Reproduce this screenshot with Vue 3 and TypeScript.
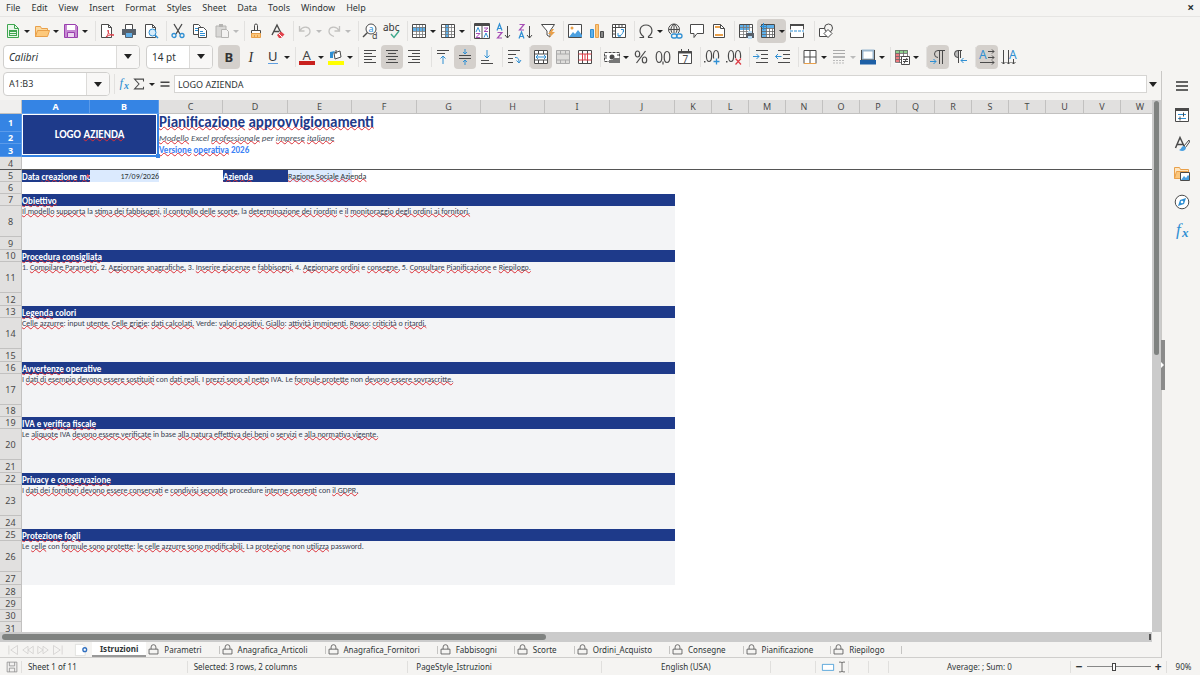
<script setup lang="ts">
import { ref } from 'vue'

interface Tool {
  icon: string
  label: string
  drop?: boolean
  active?: boolean
  disabled?: boolean
}
type Item = Tool | 'sep' | 'wide'

const K = '#4a4a4a'
const B = '#2f8fd3'
const O = '#e9a04a'
const line = (d: string, c = K, w = 1) => `<path d="${d}" fill="none" stroke="${c}" stroke-width="${w}"/>`
const fill = (d: string, c = K) => `<path d="${d}" fill="${c}"/>`
const letter = (t: string, x: number, y: number, s: number, c = K, extra = '') =>
  `<text x="${x}" y="${y}" font-size="${s}" fill="${c}" ${extra}>${t}</text>`
const paper = fill('M1 1h14v14H1z', '#fff')
const grid = line('M1.5 4.5h13M1.5 8.5h13M1.5 11.5h13M5.5 1.5v13M8.5 1.5v13M11.5 1.5v13', '#777', 0.8) + line('M1.5 1.5h13v13h-13z')

const icons: Record<string, string> = {
  new: `<path d="M2.500 1.500h7l4 4v9h-11z" fill="#e9f7ea" stroke="#3fa650"/>` + line('M9.500 1.500v4h4', '#3fa650') + fill('M4 7h8v6H4z', '#3fa650') + line('M5 9.500h6M5 11.500h6', '#e9f7ea'),
  open: `<path d="M1.500 14V3.500h5l1 2h6V8" fill="#fbd9a0" stroke="${O}"/><path d="M1.500 13.500l2-6h12l-2 6z" fill="#fdc97c" stroke="${O}"/>`,
  save: `<path d="M1.500 1.500h11l2 2v11h-13z" fill="#c688d2" stroke="#9a3fae"/><path d="M4 2h8v5H4z" fill="#fff"/><path d="M4.500 9.500h7v5h-7z" fill="#ecd5f0" stroke="#9a3fae"/>`,
  pdf: `<path d="M2.500 1.500h7l3 3v10h-10z" fill="#fff" stroke="${K}"/>` + line('M9.500 1.500v3h3') + line('M7 14c2-2 3-4 2-7c0 4 3 6 6 5c-2-1-5 0-8 2', '#dc3b45'),
  print: `<path d="M4.500 1.500h7v5h-7z" fill="#fff" stroke="${K}"/>` + fill('M1 6h14v6H1z', '#57606a') + `<path d="M4.500 9.500h7v5h-7z" fill="#62aee6" stroke="#57606a"/>`,
  preview: `<path d="M2.500 1.500h7l3 3v10h-10z" fill="#fff" stroke="${K}"/>` + line('M9.500 1.500v3h3') + `<circle cx="9.500" cy="9.500" r="3.500" fill="#d7ecfa" stroke="${B}"/>` + line('M12 12l3 3', B, 1.5),
  cut: line('M4 1l6 10M12 1L6 11', K, 1.3) + `<circle cx="4" cy="12.500" r="2" fill="none" stroke="${B}" stroke-width="1.300"/><circle cx="12" cy="12.500" r="2" fill="none" stroke="${B}" stroke-width="1.300"/>`,
  copy: `<path d="M1.500 1.500h5l2 2v8h-7z" fill="#fff" stroke="${K}"/>` + line('M3 5.500h3M3 7.500h3', B) + `<path d="M6.500 4.500h5l3 3v7h-8z" fill="#fff" stroke="${K}"/>` + line('M8 8.500h3M8 10.500h5M8 12.500h5', B),
  paste: `<path d="M2 3h10v11H2z" fill="#d9d8d6" stroke="#b5b4b2"/><path d="M5 1h4v3H5z" fill="#b5b4b2"/><path d="M7.500 6.500h5l2 2v6h-7z" fill="#f3f2f1" stroke="#b5b4b2"/>`,
  brush: line('M6.500 7V2.500a1.500 1.500 0 0 1 3 0V7') + `<path d="M3.500 7.500h9v3h-9z" fill="#fff" stroke="${K}"/><path d="M3.500 10.500h9v4h-9z" fill="#fbc77d" stroke="${O}"/>` + line('M6.500 12v2M9.500 12v2', O),
  clear: line('M2 12L7 2l4 8M4 8.500h5', K, 1.4) + `<path d="M7 12l4-3.500 3.500 3L11 15H9z" fill="#e2434d"/>` + line('M8.500 10.500l3.500 3.500', '#fff'),
  undo: line('M2.500 3v5h5M3 7.500c3-5 10-4 10 1c0 2-2 4-5 5', '#c3c2c0', 1.3),
  redo: line('M13.500 3v5h-5M13 7.500c-3-5-10-4-10 1c0 2 2 4 5 5', '#c3c2c0', 1.3),
  find: `<circle cx="9" cy="6" r="5" fill="#fff" stroke="${K}"/>` + line('M5.500 9.500L1 14', K, 1.5) + letter('a', 6.5, 8.5, 9, B) + letter('d', 10, 16, 9),
  spell: letter('abc', -1, 8, 10, '#333') + line('M7 11l3 3.500 5-6.500', '#3fa98c', 1.4),
  row: paper + fill('M2 4h13v4H2z', '#5fb0ea') + grid,
  col: paper + fill('M5 1h4v13H5z', '#5fb0ea') + grid,
  sort: `<path d="M.500 .500h15v15H.500z" fill="#fff" stroke="${K}"/>` + fill('M1 1h14v2H1z') + line('M8 3v12') + line('M2 9l2-4.500L6 9M10 14.500l2-4.500 2 4.500', B) + line('M2 10.500h4l-4 4h4M10 5h4l-4 3.500h4', '#a64fb5'),
  asc: line('M1 7.500L3.500 1 6 7.500M2 5.500h3', B, 1.2) + line('M1.500 9.500h4.500L1.500 15H6', '#a64fb5', 1.2) + line('M11.500 3v12M9 12l2.500 3 2.500-3'),
  desc: line('M1.500 1.500h4.500L1.500 7H6', '#a64fb5', 1.2) + line('M1 15.500L3.500 9 6 15.500M2 13.500h3', B, 1.2) + line('M11.500 3v12M9 12l2.500 3 2.500-3'),
  filter: `<path d="M1.500 1.500h13L10 8v6l-3-2V8z" fill="#fff" stroke="${K}"/>` + fill('M12 6l-4 5h3l-2 4 6-6h-3l2-3z', O),
  image: `<path d="M1.500 1.500h13v13h-13z" fill="#fff" stroke="${K}"/><circle cx="5" cy="5" r="1.500" fill="${O}"/>` + fill('M2 14l4-5 2 2 3-4 4 5v2z', '#4ba0e0'),
  chart: `<path d="M1.500 6.500h3v8h-3z" fill="#5fb0ea" stroke="${B}"/><path d="M6.500 1.500h3v13h-3z" fill="#fbc77d" stroke="${O}"/><path d="M11.500 8.500h3v6h-3z" fill="#888" stroke="${K}"/>`,
  pivot: `<path d="M1.500 1.500h13v13h-13z" fill="#fff" stroke="${K}"/>` + line('M1.500 4.500h13M4.500 1.500v13M8 1.500v3M11 1.500v3M1.500 8h3M1.500 11h3') + line('M7 10v3h3M12.500 9V6.500H10M7 13c3 0 5-2 5.500-6', B),
  omega: line('M1.500 14.500h4v-1C-.500 9 2 2 8 2s8.500 7 2.500 11.500v1h4', K, 1.2),
  link: `<circle cx="7" cy="6.500" r="5.500" fill="none" stroke="${K}"/>` + line('M1.500 6.500h11M7 1v11M7 1c-4 3-4 8 0 11M7 1c4 3 4 8 0 11') + `<rect x="4" y="10" width="12" height="6" fill="#f5f4f2"/><rect x="4.500" y="11" width="5.500" height="4" rx="2" fill="none" stroke="${B}" stroke-width="1.300"/><rect x="9.500" y="11" width="5.500" height="4" rx="2" fill="none" stroke="${B}" stroke-width="1.300"/>`,
  comment: `<path d="M1.500 1.500h13v9H8l-3 4v-4H1.500z" fill="#fff" stroke="${K}"/>`,
  header: `<path d="M2.500 1.500h7l4 4v9h-11z" fill="#fff" stroke="${K}"/>` + fill('M4 3h5v2H4zM4 11h8v2H4z', O) + line('M9.500 1.500v4h4'),
  area: paper + fill('M2 2h9v5H2z', '#5fb0ea') + grid + fill('M8 10h8v5H8z', '#57606a') + fill('M10 8h4v2h-4zM10 13h4v3h-4z', '#b9dcf5'),
  freeze: fill('M2 2h13v3H2zM2 2h4v12H2z', '#5fb0ea') + fill('M6 5h9v9H6z', '#fff') + line('M1.500 5.500h13M6.500 1.500v13M1.500 8.500h13M1.500 11.500h13M9.500 5.500v9M12.500 5.500v9', '#666', 0.8) + line('M1.500 1.500h13v13h-13z') + line('M3.500 0v7M0 3.500h7', B),
  split: `<path d="M1.500 1.500h13v13h-13z" fill="#fff" stroke="${K}"/>` + fill('M1 1h14v2H1z') + `<path d="M0 8h16" stroke="#fff" stroke-width="3"/><path d="M1 8h14" stroke="${B}" stroke-dasharray="3 1"/>`,
  shapes: `<path d="M1.500 5.500h8v8h-8z" fill="#fff" stroke="${K}"/><circle cx="10.500" cy="5" r="4" fill="#f5f4f2" stroke="${K}"/><path d="M10 6.500l4 4-4 4-4-4z" fill="#fff" stroke="${K}"/>`,
  bold: letter('B', 3.5, 13, 13, '#333', 'font-weight="bold"'),
  italic: letter('I', 5.5, 13, 14, '#333', 'font-style="italic" font-family="Liberation Serif"'),
  underline: letter('U', 3, 11.5, 13, '#333') + line('M3 14.500h10', '#5f9fe0'),
  color: letter('A', 3.5, 10.5, 13, '#444') + fill('M0 12h16v4H0z', '#c9211e'),
  marker: `<path d="M6 4l6-2 1 6-6 2z" fill="#fff" stroke="${K}"/>` + line('M8 5V1') + fill('M2 3l5-1-2 3v4H2z', B) + fill('M0 12h16v4H0z', '#ffff00'),
  left: line('M2 1.500h12M2 4.500h8M2 7.500h12M2 10.500h8M2 13.500h12'),
  center: line('M2 1.500h12M4 4.500h8M2 7.500h12M4 10.500h8M2 13.500h12'),
  right: line('M2 1.500h12M6 4.500h8M2 7.500h12M6 10.500h8M2 13.500h12'),
  top: line('M2 1.500h12M2 4.500h8') + line('M8 15V7M5.500 9.500L8 7l2.500 2.500', B),
  middle: line('M2 6.500h12M2 9.500h12') + line('M8 0v5M6 3l2 2 2-2M8 16v-5M6 13l2-2 2 2', B),
  bottom: line('M2 11.500h8M2 14.500h12') + line('M8 1v8M5.500 6.500L8 9l2.500-2.500', B),
  wrap: line('M2 1.500h12M2 5.500h8M2 9.500h5M2 13.500h5') + line('M9 8.500c3 0 4 1 4 5M10.500 11.500l2.500 2.500 2-3', B),
  mergecenter: `<path d="M1 1h14v14H1z" fill="#fff"/>` + line('M1.500 1.500h13v13h-13zM1.500 5h13M1.500 11h13M5.500 1.500V5M10.500 1.500V5M5.500 11v3.500M10.500 11v3.500') + line('M3 8h10M5 6L3 8l2 2M11 6l2 2-2 2', B),
  merge: `<path d="M1.500 1.500h13v13h-13z" fill="#dedddb" stroke="#aaa"/>` + line('M1.500 5h13M1.500 11h13M5.500 1.500V5M10.500 1.500V5M5.500 11v3.500M10.500 11v3.500', '#aaa'),
  unmerge: paper + line('M1.500 1.500h13v13h-13zM5.500 1.500V5M10.500 1.500V5M5.500 11v3.500M10.500 11v3.500') + line('M1.500 5h13M1.500 11h13M5.500 5v6M10.500 5v6M8 5v6', '#dc3b45'),
  money: `<path d="M.500 3.500h15v9H.500z" fill="#fff" stroke="${K}" stroke-dasharray="3 1"/><circle cx="8" cy="8" r="2.500" fill="${K}"/>` + fill('M9 9h7v5H5v-3h4z', '#777') + line('M2 6v4M14 5v2'),
  percent: line('M12.500 2L3.500 14', K, 1.2) + `<ellipse cx="4.500" cy="5" rx="2.200" ry="3" fill="none" stroke="${K}" stroke-width="1.200"/><ellipse cx="11.500" cy="11" rx="2.200" ry="3" fill="none" stroke="${K}" stroke-width="1.200"/>`,
  number: `<ellipse cx="4" cy="8" rx="2.800" ry="5.500" fill="none" stroke="${K}" stroke-width="1.200"/><ellipse cx="12" cy="8" rx="2.800" ry="5.500" fill="none" stroke="${K}" stroke-width="1.200"/>` + line('M8 12.500v3', K, 1.2),
  date: `<path d="M1.500 2.500h13v12h-13z" fill="#fff" stroke="${K}"/>` + line('M1 3.500h14', K, 2) + line('M4.500 0v3M11.500 0v3') + letter('7', 5.5, 13.5, 10),
  adddec: `<ellipse cx="5" cy="7" rx="2.600" ry="5.500" fill="none" stroke="${K}" stroke-width="1.200"/><ellipse cx="12" cy="7" rx="2.600" ry="5.500" fill="none" stroke="${K}" stroke-width="1.200"/>` + fill('M0 12h1.500v1.500H0z') + `<path d="M8 9.500h8V16H8z" fill="#f5f4f2"/>` + line('M12.500 9.500v6M9.500 12.500h6', B, 1.3),
  deldec: `<ellipse cx="5" cy="7" rx="2.600" ry="5.500" fill="none" stroke="${K}" stroke-width="1.200"/><ellipse cx="12" cy="7" rx="2.600" ry="5.500" fill="none" stroke="${K}" stroke-width="1.200"/>` + fill('M0 12h1.500v1.500H0z') + `<path d="M9 9h7v7H9z" fill="#f5f4f2"/>` + line('M9.500 9.500l5.500 6M15 9.500l-5.500 6', '#dc3b45', 1.2),
  indent: line('M3 1.500h12M8 5.500h7M8 9.500h7M3 13.500h12') + line('M0 7.500h6M3.500 5L6 7.500 3.500 10', B),
  outdent: line('M3 1.500h12M8 5.500h7M8 9.500h7M3 13.500h12') + line('M6.500 7.500h-6M3 5L.500 7.500 3 10', B),
  borders: `<path d="M2 2h12v12H2z" fill="#fff"/>` + line('M2 14.500V1.500h12v13M2 8h12M8 1.500v13') + line('M2 14.500h12', O),
  style: line('M2 1.500h12M2 4.500h12', '#aaa') + line('M2 8h12', '#b5b5b5', 2) + `<path d="M2 11.500h12M2 14h12" stroke="#bbb" stroke-dasharray="2 1"/>`,
  linecolor: `<path d="M2.500 1.500h11v9h-11z" fill="#fff" stroke="#9bb7cf" stroke-width="2"/>` + line('M1.500 1v10h13V1') + fill('M0 11h16v4.500H0z', '#1d5fa6'),
  cond: paper + fill('M1 1h13v3H1z', '#8fd08f') + fill('M1 4h5v9H1z', '#ee7b80') + line('M1.500 1.500h12v12h-12zM1.500 4.500h12M1.500 7.500h12M1.500 10.500h12M5.500 1.500v12M9.500 1.500v12', '#666', 0.8) + `<path d="M7.500 7.500h8v8h-8z" fill="#fff" stroke="${K}"/>` + line('M9 10.500h5M9 12.500h5M13 9l-3 5.500'),
  ltr: line('M9.500 15V2M12.500 15V2M15 1.500H8a3.500 3.500 0 0 0 0 7') + line('M0 12.500h6M3.500 10L6 12.500 3.500 15', B),
  rtl: fill('M6 1a3.500 3.500 0 0 0 0 7.500z', '#bbb') + line('M6.500 14V2M8.500 9V2M10 1.500H6a3.500 3.500 0 0 0 0 7') + line('M15 11.500H9M11.500 9L9 11.500l2.500 2.500', B),
  horizontal: letter('A', 0, 10, 12, B) + line('M9 2.500h6M9 8.500h6M1 13.500h14M13 .500l2 2-2 2M13 6.500l2 2-2 2M13 11.500l2 2-2 2'),
  vertical: letter('A', 8, 9.5, 12, B) + line('M2.500 1v14M7.500 1v14M12.500 10v5M.500 13l2 2 2-2M5.500 13l2 2 2-2M10.500 13l2 2 2-2'),
  menu: line('M2 4h12M2 8h12M2 12h12', '#333', 1.6),
  properties: `<path d="M1.500 1.500h13v13h-13z" fill="#fff" stroke="${K}"/>` + fill('M1 1h14v3H1z') + line('M4 7.500h8M4 11.500h8', B) + line('M9.500 5.500v4M6 9.500v4'),
  styles: line('M1.500 12L6 1.500l4 8.500M3 8.500h6', K, 1.5) + `<path d="M15 4l-5 6 1.500 1.500L15.500 6z" fill="#fff" stroke="${K}"/>` + fill('M10 10c-3 0-2 3-5 4 3 2 7 1 7-2.500z', '#4ba0e0'),
  gallery: `<path d="M.500 13.500v-11h5l1 2h8v3" fill="#fde5c0" stroke="${O}"/><path d="M.500 13.500l2-7h11v7z" fill="#fbc77d" stroke="${O}"/><path d="M6.500 7.500h9v8h-9z" fill="#fff" stroke="${K}"/>` + fill('M7 15l3-4 2 2 2-3 1 1v4z', '#4ba0e0'),
  navigator: `<circle cx="8" cy="8" r="6.800" fill="#fff" stroke="${K}"/>` + `<path d="M12 4l-2 6-6 2 2-6z" fill="#2f8fd3"/><circle cx="8" cy="8" r="1.300" fill="#fff"/>`,
  fx: letter('f', 2, 12, 17, B, 'font-style="italic" font-family="Liberation Serif"') + letter('x', 8, 14, 13, B, 'font-style="italic" font-weight="bold" font-family="Liberation Serif"'),
  sigma: line('M14 4.500V1.500H2l6 6.500-6 6.500h12v-3', K, 1.4),
  equals: line('M2 5.500h12M2 10.500h12', '#444', 2),
  lock: line('M1.500 7.500h13v7h-13zM4.500 7.500v-3a3.500 3.500 0 0 1 7 0v3', '#555', 1.2),
  first: line('M2.500 2v12M14 2L5 8l9 6V2', '#cfcecc'),
  prev: line('M8 3L1 8l7 5zM15 3L8 8l7 5z', '#cfcecc'),
  next: line('M1 3l7 5-7 5zM8 3l7 5-7 5z', '#cfcecc'),
  last: line('M13.500 2v12M2 2l9 6-9 6V2', '#cfcecc'),
  addsheet: `<path d="M.500 .500h10l3 3v12h-13z" fill="#fff" stroke="#dad9d7"/>` + `<circle cx="13" cy="7.500" r="2.500" fill="#fff" stroke="#2f6fc0" stroke-width="1.800"/>`,
  disk: `<path d="M1.500 1.500h13v13h-13z" fill="#f2f1f0" stroke="#888"/>` + line('M4.500 1.500v5h7v-5M4.500 14.500v-5h7v5', '#888'),
  rect: `<path d="M.500 4.500h15v8H.500z" fill="#fff" stroke="${B}"/>`,
  beam: line('M4 1.500h3l1 1 1-1h3M8 2v12M4 14.500h3l1-1 1 1h3', '#444')
}

const tool = (icon: string, label: string, flags = ''): Tool => ({
  icon, label, drop: flags.includes('d'), active: flags.includes('a'), disabled: flags.includes('x')
})

const standard: Item[] = [
  tool('new', 'New', 'd'), tool('open', 'Open', 'd'), tool('save', 'Save', 'd'), 'wide',
  tool('pdf', 'Export as PDF'), tool('print', 'Print'), tool('preview', 'Print Preview'), 'sep',
  tool('cut', 'Cut'), tool('copy', 'Copy'), tool('paste', 'Paste', 'dx'), 'sep',
  tool('brush', 'Clone Formatting'), tool('clear', 'Clear Direct Formatting'), 'sep',
  tool('undo', 'Undo', 'dx'), tool('redo', 'Redo', 'dx'), 'wide',
  tool('find', 'Find and Replace'), tool('spell', 'Spelling'), 'sep',
  tool('row', 'Row', 'd'), tool('col', 'Column', 'd'), 'sep',
  tool('sort', 'Sort'), tool('asc', 'Sort Ascending'), tool('desc', 'Sort Descending'), tool('filter', 'AutoFilter'), 'sep',
  tool('image', 'Insert Image'), tool('chart', 'Insert Chart'), tool('pivot', 'Pivot Table'), 'sep',
  tool('omega', 'Special Character', 'd'), tool('link', 'Hyperlink'), tool('comment', 'Comment'), tool('header', 'Headers and Footers'), 'sep',
  tool('area', 'Define Print Area'), tool('freeze', 'Freeze Rows and Columns', 'da'), tool('split', 'Split Window'), 'wide',
  tool('shapes', 'Show Draw Functions')
]

const formatting: Item[] = [
  tool('bold', 'Bold', 'a'), tool('italic', 'Italic'), tool('underline', 'Underline', 'd'), 'sep',
  tool('color', 'Font Color', 'd'), tool('marker', 'Background Color', 'd'), 'sep',
  tool('left', 'Align Left'), tool('center', 'Center Horizontally', 'a'), tool('right', 'Align Right'), 'wide',
  tool('top', 'Align Top'), tool('middle', 'Center Vertically', 'a'), tool('bottom', 'Align Bottom'), 'sep',
  tool('wrap', 'Wrap Text'), 'sep',
  tool('mergecenter', 'Merge and Center', 'a'), tool('merge', 'Merge Cells', 'x'), tool('unmerge', 'Unmerge Cells'), 'sep',
  tool('money', 'Currency', 'd'), tool('percent', 'Percent'), tool('number', 'Number'), tool('date', 'Date'), 'sep',
  tool('adddec', 'Add Decimal Place'), tool('deldec', 'Delete Decimal Place'), 'sep',
  tool('indent', 'Increase Indent'), tool('outdent', 'Decrease Indent'), 'sep',
  tool('borders', 'Borders', 'd'), tool('style', 'Border Style', 'dx'), tool('linecolor', 'Border Color', 'd'), 'sep',
  tool('cond', 'Conditional Formatting', 'd'), 'wide',
  tool('ltr', 'Left-To-Right', 'a'), tool('rtl', 'Right-To-Left'), 'sep',
  tool('horizontal', 'Text left to right', 'a'), tool('vertical', 'Text top to bottom')
]

const menus = ['File', 'Edit', 'View', 'Insert', 'Format', 'Styles', 'Sheet', 'Data', 'Tools', 'Window', 'Help']
const sidebar = [
  tool('menu', 'Sidebar Settings'), tool('properties', 'Properties'), tool('styles', 'Styles'),
  tool('gallery', 'Gallery'), tool('navigator', 'Navigator'), tool('fx', 'Functions')
]
const columns = 'ABCDEFGHIJKLMNOPQRSTUVW'.split('')
const columnClass = ['a', 'b', 'm', 'l', 'm', 'l', 'm', 'm', 'l', 'l', 's', 's', 's', 's', 's', 's', 't', 's', 's', 's', 't', 's', 'rest']

// Underscores delimit the words flagged by the spelling checker.
const sections = [
  { row: 7, title: '_Obiettivo_', body: '_Il modello_ _supporta_ la _stima dei fabbisogni_, _il controllo delle_ _scorte_, la _determinazione dei riordini_ e _il_ _monitoraggio degli ordini ai fornitori._' },
  { row: 10, title: '_Procedura_ _consigliata_', body: '1. _Compilare Parametri._ 2. _Aggiornare anagrafiche._ 3. _Inserire giacenze_ e _fabbisogni._ 4. _Aggiornare ordini_ e _consegne._ 5. _Consultare_ _Pianificazione_ e _Riepilogo._' },
  { row: 13, title: '_Legenda_ colori', body: '_Celle azzurre_: input _utente._ _Celle grigie_: _dati calcolati._ Verde: _valori positivi._ _Giallo_: _attività imminenti._ _Rosso_: _criticità_ o _ritardi._' },
  { row: 16, title: '_Avvertenze_ operative', body: 'I _dati di esempio devono essere sostituiti_ con _dati reali._ I _prezzi sono al netto_ IVA. Le _formule protette_ non _devono essere sovrascritte._' },
  { row: 19, title: 'IVA e _verifica_ _fiscale_', body: 'Le _aliquote_ IVA _devono essere verificate_ in base _alla natura effettiva dei beni_ o _servizi_ e _alla normativa vigente._' },
  { row: 22, title: 'Privacy e _conservazione_', body: 'I _dati dei fornitori devono essere conservati_ e _condivisi secondo_ procedure _interne coerenti_ con _il GDPR._' },
  { row: 25, title: '_Protezione_ _fogli_', body: 'Le _celle_ con _formule sono protette_: _le celle azzurre sono modificabili._ La _protezione_ non _utilizza_ password.' }
]
const parts = (s: string) => s.split('_').map((text, i) => ({ text, bad: i % 2 === 1 })).filter(p => p.text)

const sheets = ['Istruzioni', 'Parametri', 'Anagrafica_Articoli', 'Anagrafica_Fornitori', 'Fabbisogni', 'Scorte', 'Ordini_Acquisto', 'Consegne', 'Pianificazione', 'Riepilogo']
const fontName = ref('Calibri')
const fontSize = ref('14 pt')
const cellName = ref('A1:B3')
const formula = ref('LOGO AZIENDA')
const zoom = ref(50)
</script>

<template>
  <div class="app">
    <nav class="menubar">
      <button v-for="m in menus" :key="m">{{ m }}</button>
      <button class="close" aria-label="Close document">×</button>
    </nav>

    <div class="toolbar">
      <template v-for="(t, i) in standard" :key="i">
        <span v-if="typeof t === 'string'" class="sep" :class="t"></span>
        <button v-else class="tool" :class="{ active: t.active, off: t.disabled }" :disabled="t.disabled" :aria-label="t.label">
          <svg viewBox="0 0 16 16" v-html="icons[t.icon]"></svg>
          <i v-if="t.drop" class="arrow"></i>
        </button>
      </template>
    </div>

    <div class="toolbar second">
      <div class="combo family">
        <input v-model="fontName" aria-label="Font name" />
        <button aria-label="Font list"><i class="arrow big"></i></button>
      </div>
      <div class="combo size">
        <input v-model="fontSize" aria-label="Font size" />
        <button aria-label="Size list"><i class="arrow big"></i></button>
      </div>
      <template v-for="(t, i) in formatting" :key="i">
        <span v-if="typeof t === 'string'" class="sep" :class="t"></span>
        <button v-else class="tool" :class="{ active: t.active, off: t.disabled }" :disabled="t.disabled" :aria-label="t.label">
          <svg viewBox="0 0 16 16" v-html="icons[t.icon]"></svg>
          <i v-if="t.drop" class="arrow"></i>
        </button>
      </template>
    </div>

    <div class="work">
      <main>
        <div class="formulabar">
          <div class="combo name">
            <input v-model="cellName" aria-label="Name box" />
            <button aria-label="Named ranges"><i class="arrow big"></i></button>
          </div>
          <span class="sep"></span>
          <button class="fn" aria-label="Function wizard"><svg viewBox="0 0 16 16" v-html="icons.fx"></svg></button>
          <button class="fn sum" aria-label="Select function"><svg viewBox="0 0 16 16" v-html="icons.sigma"></svg><i class="arrow"></i></button>
          <button class="fn" aria-label="Formula"><svg viewBox="0 0 16 16" v-html="icons.equals"></svg></button>
          <input v-model="formula" class="formula" aria-label="Input line" />
          <button class="expand" aria-label="Expand formula bar"><i class="arrow big"></i></button>
        </div>

        <div class="gridarea">
          <div class="sheet">
            <table>
              <colgroup>
                <col class="c-head" />
                <col v-for="(c, i) in columns" :key="c" :class="'c-' + columnClass[i]" />
              </colgroup>
              <thead>
                <tr>
                  <th class="corner"></th>
                  <th v-for="(c, i) in columns" :key="c" scope="col" :class="{ sel: i < 2 }">{{ c }}</th>
                </tr>
              </thead>
              <tbody>
                <tr class="h18">
                  <th scope="row" class="sel">1</th>
                  <td class="logo" colspan="2" rowspan="3">LOGO <u>AZIENDA</u><span class="handle"></span></td>
                  <td class="title" colspan="21"><u>Pianificazione</u> <u>approvvigionamenti</u></td>
                </tr>
                <tr class="h12">
                  <th scope="row" class="sel">2</th>
                  <td class="subtitle" colspan="21"><u>Modello</u> Excel <u>professionale</u> per <u>imprese</u> <u>italiane</u></td>
                </tr>
                <tr class="h13">
                  <th scope="row" class="sel">3</th>
                  <td class="version" colspan="21"><u>Versione</u> <u>operativa</u> 2026</td>
                </tr>
                <tr class="h13 frozen"><th scope="row">4</th><td colspan="23"></td></tr>
                <tr class="h12">
                  <th scope="row">5</th>
                  <td class="key cut">Data <u>creazione</u> <u>modello</u></td>
                  <td class="value right">17/09/2026</td>
                  <td></td>
                  <td class="key"><u>Azienda</u></td>
                  <td class="value"><u>Ragione Sociale Azienda</u></td>
                  <td colspan="18"></td>
                </tr>
                <tr class="h12"><th scope="row">6</th><td colspan="23"></td></tr>
                <template v-for="s in sections" :key="s.row">
                  <tr class="h12">
                    <th scope="row">{{ s.row }}</th>
                    <td class="band" colspan="10"><span v-for="(p, i) in parts(s.title)" :key="i" :class="{ bad: p.bad }">{{ p.text }}</span></td>
                    <td colspan="13"></td>
                  </tr>
                  <tr class="h31">
                    <th scope="row">{{ s.row + 1 }}</th>
                    <td class="note" colspan="10" rowspan="2"><span v-for="(p, i) in parts(s.body)" :key="i" :class="{ bad: p.bad }">{{ p.text }}</span></td>
                    <td colspan="13"></td>
                  </tr>
                  <tr :class="s.row === 16 ? 'h12' : 'h13'">
                    <th scope="row">{{ s.row + 2 }}</th>
                    <td colspan="13"></td>
                  </tr>
                </template>
                <tr v-for="n in [28, 29, 30, 31]" :key="n" :class="n === 29 || n === 30 ? 'h12' : 'h13'"><th scope="row">{{ n }}</th><td colspan="23"></td></tr>
              </tbody>
            </table>
          </div>
          <div class="vscroll"><span></span></div>
        </div>
        <div class="hscroll"><span></span><b></b></div>

        <div class="tabs">
          <button class="nav" aria-label="First sheet"><svg viewBox="0 0 16 16" v-html="icons.first"></svg></button>
          <button class="nav" aria-label="Previous sheet"><svg viewBox="0 0 16 16" v-html="icons.prev"></svg></button>
          <button class="nav" aria-label="Next sheet"><svg viewBox="0 0 16 16" v-html="icons.next"></svg></button>
          <button class="nav" aria-label="Last sheet"><svg viewBox="0 0 16 16" v-html="icons.last"></svg></button>
          <button class="add" aria-label="Add sheet"><svg viewBox="0 0 16 16" v-html="icons.addsheet"></svg></button>
          <button v-for="(s, i) in sheets" :key="s" class="tab" :class="{ current: i === 0 }">
            <svg v-if="i" viewBox="0 0 16 16" v-html="icons.lock"></svg>{{ s }}
          </button>
        </div>
      </main>
      <aside>
        <button v-for="t in sidebar" :key="t.icon" :aria-label="t.label"><svg viewBox="0 0 16 16" v-html="icons[t.icon]"></svg></button>
        <span class="grip"><i></i></span>
      </aside>
    </div>

    <footer>
      <span class="cell disk"><svg viewBox="0 0 16 16" v-html="icons.disk"></svg></span>
      <span class="cell">Sheet 1 of 11</span>
      <span class="cell">Selected: 3 rows, 2 columns</span>
      <span class="cell style">PageStyle_Istruzioni</span>
      <span class="cell mid">English (USA)</span>
      <span class="cell"></span>
      <span class="cell mode"><svg viewBox="0 0 16 16" v-html="icons.rect"></svg><svg viewBox="0 0 16 16" v-html="icons.beam"></svg></span>
      <span class="cell"></span>
      <span class="cell"></span>
      <span class="cell mid">Average: ; Sum: 0</span>
      <span class="cell zoom">
        <button aria-label="Zoom out">−</button>
        <input v-model="zoom" type="range" min="0" max="120" aria-label="Zoom" />
        <button aria-label="Zoom in">+</button>
      </span>
      <span class="cell mid">90%</span>
    </footer>
  </div>
</template>

<style>
body {
  margin: 0;
}
</style>

<style scoped>
.app {
  display: flex;
  flex-direction: column;
  height: 100vh;
  overflow: hidden;
  background: #f5f4f2;
  color: #2e3436;
  font: 9px/12px "Noto Sans", "Open Sans", sans-serif;
}
.app * {
  box-sizing: border-box;
}
button,
input {
  margin: 0;
  padding: 0;
  border: 0;
  background: none;
  color: inherit;
  font: inherit;
}
input {
  min-width: 0;
  outline: 0;
}
svg {
  display: block;
  flex: none;
  width: 16px;
  height: 16px;
  overflow: visible;
}
.menubar {
  display: flex;
  flex: none;
  align-items: center;
  gap: 11px;
  height: 17px;
  padding: 0 6px;
  border-bottom: 1px solid #e6e5e3;
}
.menubar .close {
  margin-left: auto;
  font-size: 12px;
  font-weight: bold;
  line-height: 16px;
}
.toolbar {
  display: flex;
  flex: none;
  align-items: center;
  height: 27px;
  padding-left: 2px;
}
.second {
  padding: 0 0 2px 3px;
}
.tool {
  display: flex;
  align-items: center;
  height: 24px;
  padding: 0 3px;
  border-radius: 4px;
}
.tool .arrow {
  margin: 2px 0 0 3px;
}
.tool:has(.arrow) {
  padding-right: 1px;
}
.tool.active {
  background: #d4d0cc;
}
.arrow {
  flex: none;
  width: 6px;
  border: 3px solid transparent;
  border-top-color: #222;
  border-bottom: 0;
}
.off .arrow {
  border-top-color: #bbb;
}
.arrow.big {
  width: 8px;
  border-width: 5px 4px 0;
}
.sep {
  flex: none;
  width: 5px;
  height: 20px;
  border-right: 1px solid #e2e1df;
}
.sep.wide {
  width: 7px;
}
.combo {
  display: flex;
  flex: none;
  height: 24px;
  border: 1px solid #d0cfcd;
  border-radius: 4px;
  background: #fff;
  overflow: hidden;
}
.combo input {
  flex: 1;
  padding-left: 5px;
}
.combo button {
  display: flex;
  align-items: center;
  justify-content: center;
  width: 23px;
  border-left: 1px solid #dcdbd9;
  background: #f8f7f6;
}
.family {
  width: 137px;
  margin-right: 6px;
  font-size: 10px;
  font-style: italic;
}
.size {
  width: 67px;
  margin-right: 5px;
  font-size: 10px;
}
.work {
  display: flex;
  flex: 1;
  min-height: 0;
}
main {
  display: flex;
  flex: 1;
  flex-direction: column;
  min-width: 0;
  border-right: 1px solid #c9c8c6;
}
.formulabar {
  display: flex;
  flex: none;
  align-items: center;
  height: 29px;
  padding: 0 4px 3px 3px;
}
.name {
  width: 107px;
}
.formulabar .sep {
  margin-right: 3px;
}
.fn {
  display: flex;
  align-items: center;
  width: 15px;
  height: 20px;
}
.fn svg {
  width: 12px;
  height: 12px;
}
.fn.sum {
  width: 26px;
}
.fn.sum .arrow {
  margin-left: 4px;
}
.formula {
  flex: 1;
  height: 18px;
  padding-left: 3px;
  border: 1px solid #d6d5d3;
  background: #fff;
}
.expand {
  display: flex;
  align-items: center;
  height: 18px;
  margin-left: 2px;
}
.gridarea {
  display: flex;
  flex: 1;
  min-height: 0;
}
.sheet {
  flex: 1;
  min-width: 0;
  overflow: hidden;
  background: #fff;
}
table {
  width: 100%;
  border-spacing: 0;
  table-layout: fixed;
}
.c-head { width: 22px; }
.c-a { width: 68px; }
.c-b { width: 69px; }
.c-m { width: 64px; }
.c-l { width: 65px; }
.c-s { width: 37px; }
.c-t { width: 38px; }
th,
td {
  padding: 0;
  line-height: 11px;
  white-space: nowrap;
}
th {
  border-right: 1px solid #c2c1c0;
  border-bottom: 1px solid #c2c1c0;
  background: #e1e0df;
  color: #4a4a4a;
  font-weight: normal;
  vertical-align: bottom;
}
thead th {
  height: 14px;
  vertical-align: middle;
}
thead th:last-child {
  padding-left: 7px;
  border-right: 0;
}
th.corner {
  background: #f0efee;
}
th.sel {
  border-color: #5b9bea;
  background: #3584e4;
  color: #fff;
  font-weight: bold;
}
.h12 { height: 12px; }
.h13 { height: 13px; }
.h18 { height: 18px; }
.h31 { height: 31px; }
.h18 th,
.h31 th {
  vertical-align: middle;
}
.frozen th,
.frozen td {
  border-bottom: 1px solid #555;
}
td {
  font-family: Carlito, Lato, "Noto Sans", sans-serif;
  font-size: 8px;
}
u,
.bad {
  text-decoration: underline wavy #dc3038 1px;
  text-decoration-skip-ink: none;
  text-underline-offset: -1px;
}
.logo {
  position: relative;
  border: solid #3584e4;
  border-width: 0 2px 2px 0;
  background: #1e3a8a;
  box-shadow: inset 0 0 0 1px #fff;
  color: #fff;
  font-size: 11px;
  font-weight: bold;
  text-align: center;
}
.handle {
  position: absolute;
  right: -3px;
  bottom: -3px;
  width: 4px;
  height: 4px;
  background: #3584e4;
}
.title {
  color: #1e3a8a;
  font-size: 15px;
  font-weight: bold;
  line-height: 16px;
  vertical-align: top;
}
.subtitle {
  color: #4b5563;
  font-size: 9px;
  font-style: italic;
  vertical-align: top;
}
.version {
  color: #3b82f6;
  font-size: 9px;
  font-weight: bold;
  vertical-align: top;
}
.key {
  position: relative;
  overflow: hidden;
  background: #1e3a8a;
  color: #fff;
  font-size: 9px;
  font-weight: bold;
}
.cut::after {
  content: "";
  position: absolute;
  top: 4px;
  right: 0;
  border: 2px solid transparent;
  border-left: 3px solid #e8505a;
  border-right: 0;
}
.value {
  background: #dbeafe;
}
.right {
  text-align: right;
}
.band {
  background: #1e3a8a;
  color: #fff;
  font-size: 9px;
  font-weight: bold;
}
.note {
  background: #f3f4f6;
  color: #374151;
  vertical-align: top;
}
.vscroll {
  flex: none;
  width: 9px;
  padding: 1px 2px;
  background: #cbcbcb;
}
.vscroll span {
  display: block;
  height: 48%;
  border-radius: 3px;
  background: #7f8280;
}
.hscroll {
  display: flex;
  flex: none;
  align-items: center;
  justify-content: space-between;
  height: 10px;
  margin-right: 9px;
  padding: 0 1px 0 2px;
  background: #cbcbcb;
}
.hscroll span {
  width: calc(47% + 4px);
  height: 6px;
  border-radius: 3px;
  background: #7f8280;
}
.hscroll b {
  width: 2px;
  height: 6px;
  background: #555;
}
.tabs {
  display: flex;
  flex: none;
  height: 16px;
  padding-left: 6px;
  border-bottom: 1px solid #cfcecc;
  font-size: 8px;
}
.nav svg,
.add svg {
  width: 14px;
  height: 12px;
}
.nav {
  width: 15px;
}
.add {
  width: 26px;
  padding-left: 8px;
}
.tab {
  display: flex;
  align-items: center;
  gap: 5px;
  padding: 0 18px 0 2px;
  background: linear-gradient(#c5c4c2, #c5c4c2) right center / 1px 8px no-repeat;
}
.tab svg {
  width: 11px;
  height: 11px;
}
.tab.current {
  padding: 0 8px;
  border-bottom: 2px solid #999;
  background: #fff;
  font-weight: bold;
}
aside {
  position: relative;
  display: flex;
  flex: none;
  flex-direction: column;
  align-items: center;
  gap: 13px;
  width: 38px;
  padding: 7px 0 0 1px;
}
.grip {
  position: absolute;
  top: calc(50% - 25px);
  left: -1px;
  display: flex;
  align-items: center;
  width: 4px;
  height: 50px;
  background: #8b8b8b;
}
.grip i {
  border: 3px solid transparent;
  border-left-color: #fff;
  border-right: 0;
}
footer {
  display: grid;
  flex: none;
  grid-template-columns: 22fr 166fr 221fr 194fr 169fr 45fr 31fr 20fr 20fr 183fr 96fr 33fr;
  align-items: center;
  height: 17px;
  font-size: 8px;
}
.cell {
  display: flex;
  align-items: center;
  height: 12px;
  padding-left: 6px;
  border-right: 1px solid #e0dfdd;
  white-space: nowrap;
}
.cell.style {
  padding-left: 8px;
}
.cell:last-child {
  border: 0;
}
.cell.mid {
  justify-content: center;
  padding: 0;
}
.cell svg {
  width: 12px;
  height: 12px;
}
.mode {
  gap: 2px;
}
.cell.zoom {
  gap: 4px;
  justify-content: center;
  padding: 0;
}
.zoom button {
  font-size: 12px;
  font-weight: bold;
}
.zoom input {
  flex: none;
  width: 64px;
  height: 9px;
  appearance: none;
  background: linear-gradient(#888, #888) center / 100% 1px no-repeat;
}
.zoom input::-webkit-slider-thumb {
  width: 4px;
  height: 8px;
  border: 1px solid #444;
  background: #fff;
  appearance: none;
}
</style>
